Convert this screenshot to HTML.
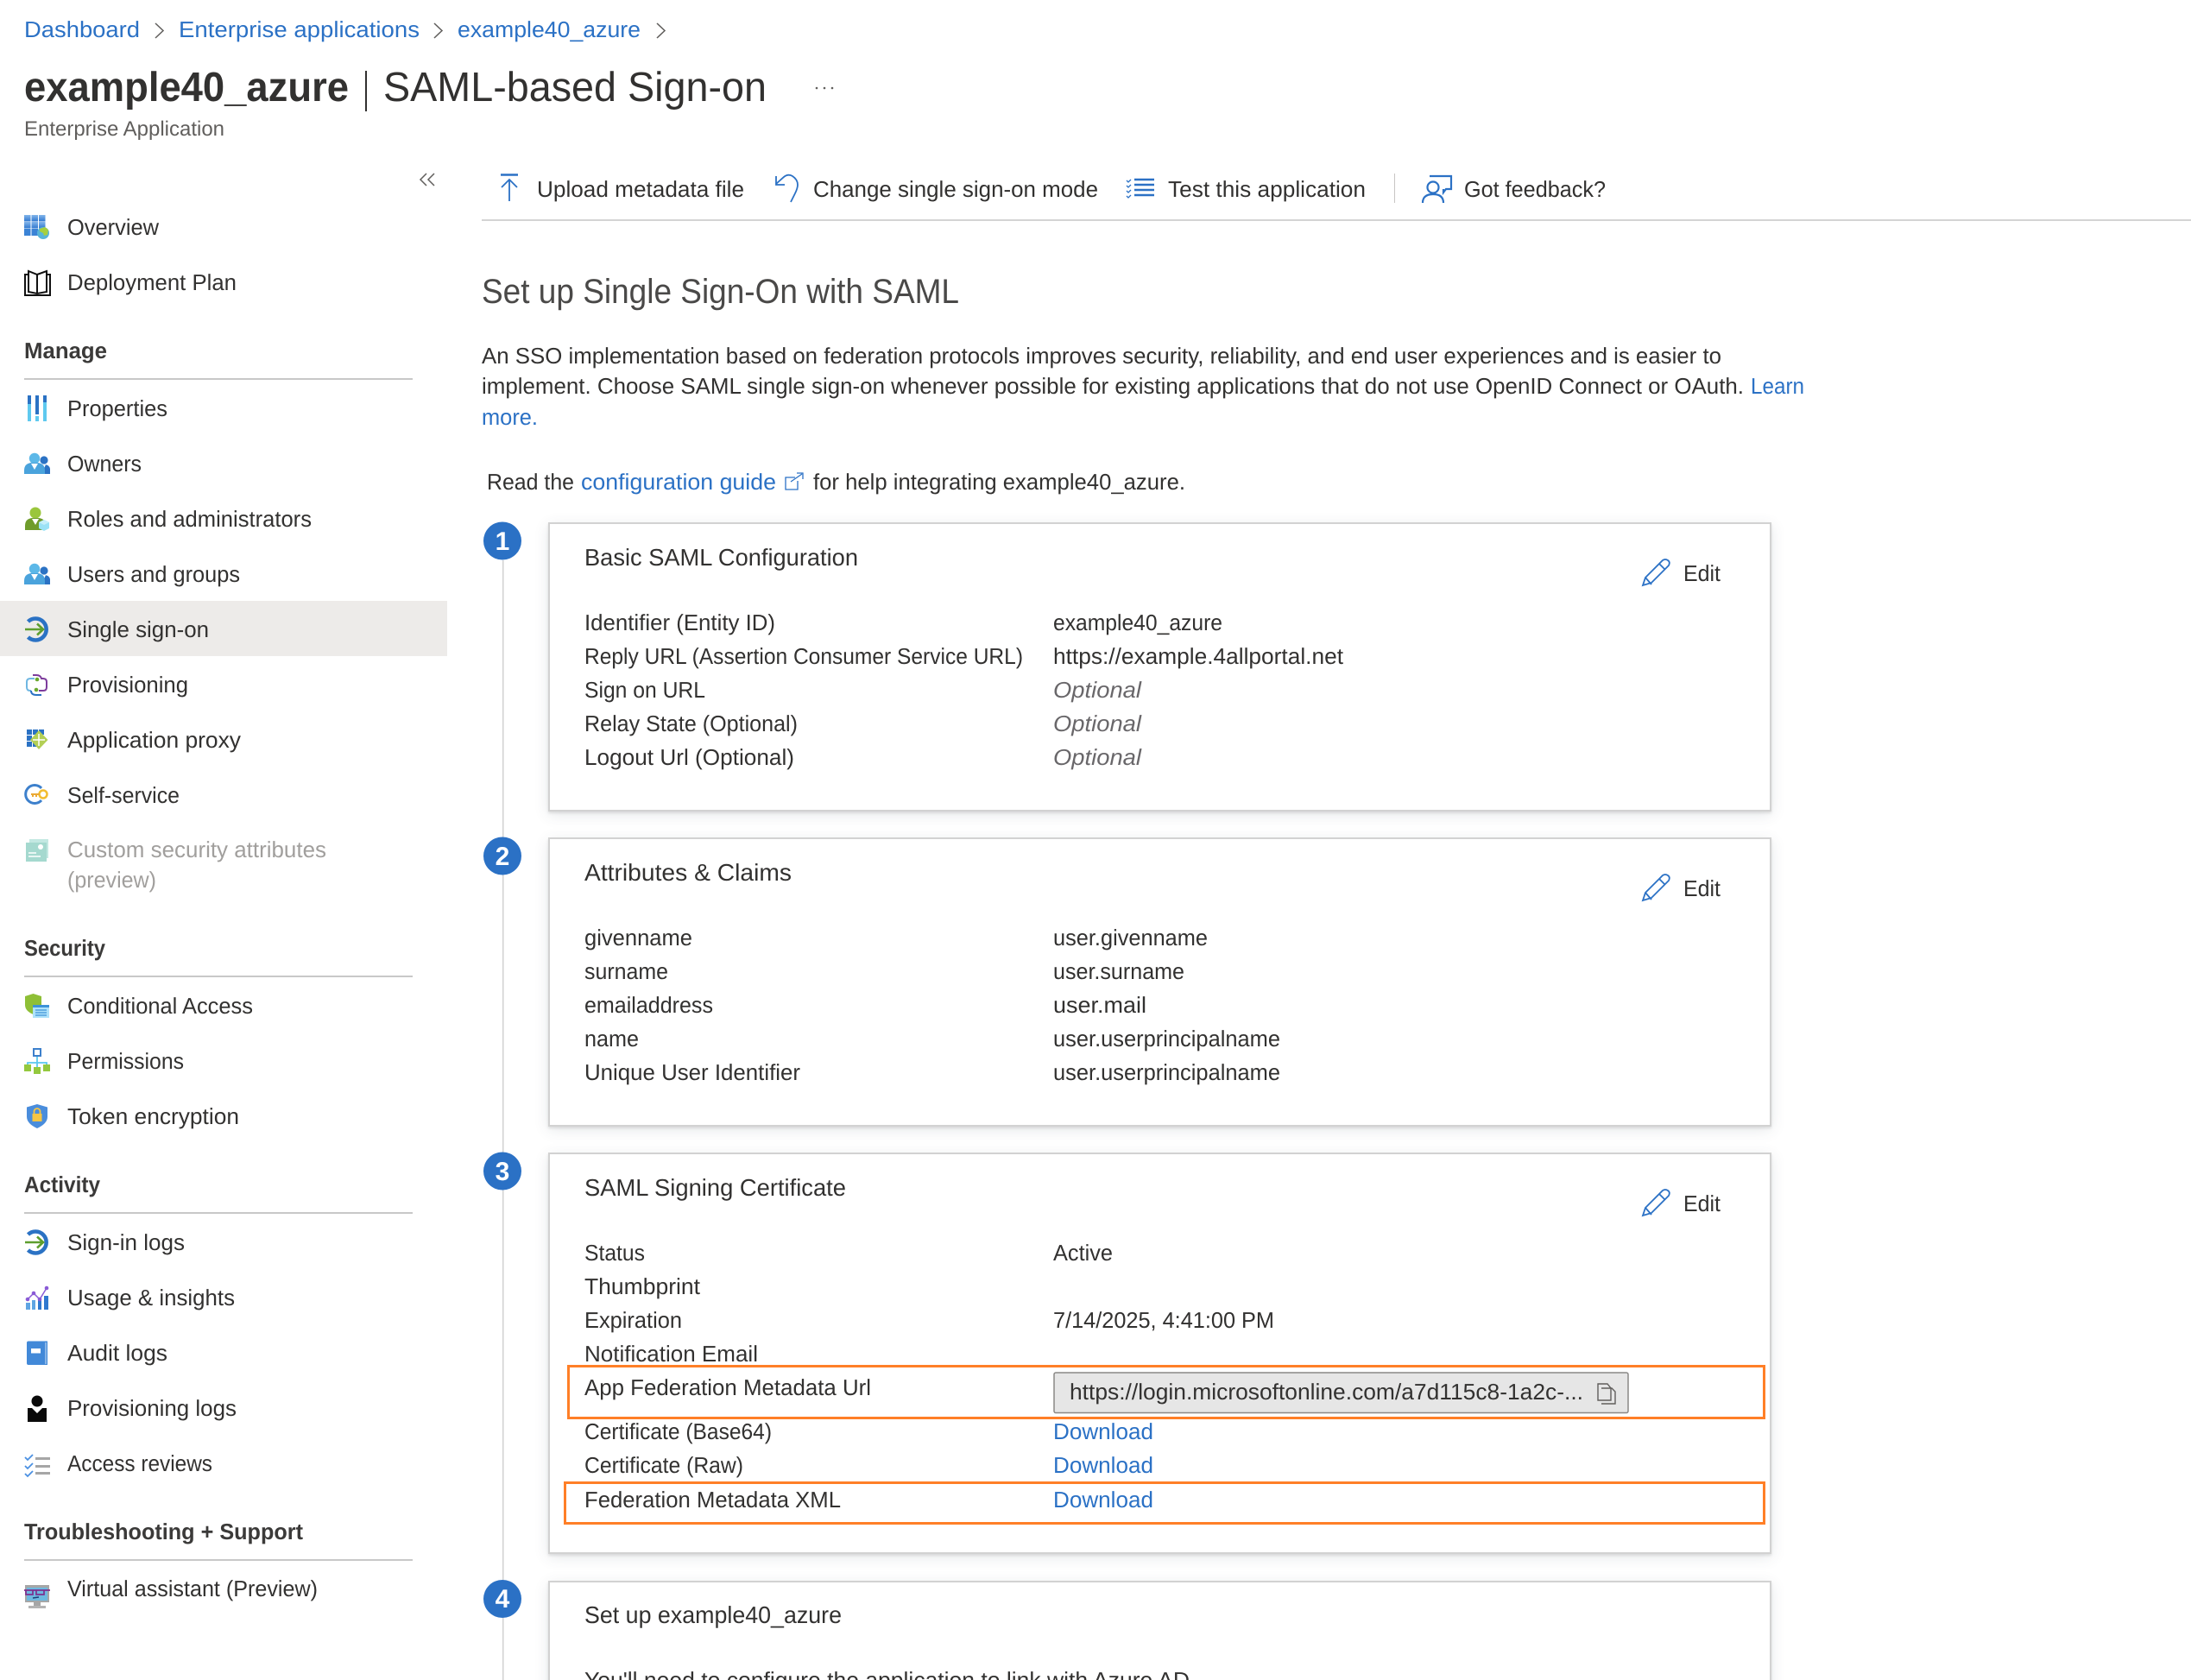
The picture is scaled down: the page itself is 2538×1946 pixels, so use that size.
<!DOCTYPE html>
<html lang="en">
<head>
<meta charset="utf-8">
<title>example40_azure | SAML-based Sign-on</title>
<style>
html,body{margin:0;padding:0;background:#fff;width:2538px;height:1946px;overflow:hidden}
#page{position:relative;width:2538px;height:1946px;overflow:hidden;background:#fff}
.card{position:absolute;left:635px;width:1417px;box-sizing:border-box;background:#fff;border:2px solid #d2d2d2;box-shadow:0 2px 3px rgba(0,0,0,.1),0 4px 16px rgba(60,70,90,.12)}
svg{position:absolute;left:0;top:0}
text{font-family:"Liberation Sans",Arial,sans-serif;font-size:26px;fill:#323130;text-rendering:geometricPrecision;white-space:pre;transform:translateY(-1px)}
.l{fill:#2b71c5}
.b{font-weight:700;fill:#3b3a39}
.g{fill:#a19f9d}
.o{font-style:italic;fill:#69676a}
.t{font-size:27.5px}
.c text{transform:translate(-1px,-1px)}
</style>
</head>
<body>
<div id="page">
<div class="card" style="top:605px;height:335px"></div>
<div class="card" style="top:970px;height:335px"></div>
<div class="card" style="top:1335px;height:465px"></div>
<div class="card" style="top:1831px;height:135px"></div>
<svg width="2538" height="1946" viewBox="0 0 2538 1946" xmlns="http://www.w3.org/2000/svg">
<defs>
<linearGradient id="pb" x1="0" y1="0" x2="0" y2="1"><stop offset="0" stop-color="#83b5ea"/><stop offset="1" stop-color="#2f78cf"/></linearGradient>
<g id="people">
<circle cx="51" cy="533" r="4.600" fill="#2b72c4"/><path d="M45 549v-6q0-5 6-5t7 5v6z" fill="#2b72c4"/><path d="M49 538l2 5 2-5z" fill="#fff"/>
<circle cx="40" cy="531" r="6.200" fill="#5cb8e8"/><path d="M28 549v-4q0-8 8-9h8q8 1 8 9v4z" fill="#4aa3dc"/><path d="M36 537l4 7 4-7z" fill="#fff"/>
</g>
<g id="sso" fill="none">
<path d="M32.500 720a12.500 12.500 0 1 1 0 18" stroke="#2b72c4" stroke-width="4.600"/>
<path d="M29 729h21M43 722.500l7 6.500-7 6.500" stroke="#5e9e2e" stroke-width="2.600"/>
</g>
<g id="edit" fill="none" stroke="#2b71c5" stroke-width="1.800">
<path d="M1903 678l3-9 20-20q3-2 6 0t1 6l-20 20zM1906 669l7 8M1922 653l7 7"/>
</g>
</defs>

<!-- breadcrumb -->
<text x="28" y="44" class="l" textLength="134" lengthAdjust="spacingAndGlyphs">Dashboard</text>
<text x="207" y="44" class="l" textLength="279" lengthAdjust="spacingAndGlyphs">Enterprise applications</text>
<text x="530" y="44" class="l" textLength="212" lengthAdjust="spacingAndGlyphs">example40_azure</text>
<g fill="none" stroke="#605e5c" stroke-width="1.500"><path d="M180 27l9 8.500-9 8.500M503 27l9 8.500-9 8.500M761 27l9 8.500-9 8.500"/></g>

<!-- title -->
<text x="28" y="118" class="b" style="font-size:48px;fill:#323130" textLength="376" lengthAdjust="spacingAndGlyphs">example40_azure</text>
<rect x="423" y="82" width="2" height="47" fill="#323130"/>
<text x="444" y="118" style="font-size:48px" textLength="444" lengthAdjust="spacingAndGlyphs">SAML-based Sign-on</text>
<g fill="#605e5c"><circle cx="946" cy="102" r="1.300"/><circle cx="955" cy="102" r="1.300"/><circle cx="964" cy="102" r="1.300"/></g>
<text x="28" y="158" style="font-size:24px;fill:#605e5c" textLength="232" lengthAdjust="spacingAndGlyphs">Enterprise Application</text>
<path d="M494 201l-7 7 7 7M503 201l-7 7 7 7" fill="none" stroke="#605e5c" stroke-width="1.500"/>

<!-- toolbar -->
<g fill="none" stroke="#2b71c5" stroke-width="1.800">
<path d="M580 202.500h20" stroke-width="2.400"/><path d="M590 233v-25M581 217l9-9 9 9"/>
<path d="M899 204v10h10M899 213l9-8q5-4 10-1 6 4 6 10 0 4-3 10l-5 10" />
</g>
<g fill="none" stroke="#2b71c5" stroke-width="2.200">
<path d="M1314 208h23M1314 214h23M1314 220h23M1314 226h23" stroke-width="2.400"/>
<path d="M1305 209l2 2 3-3M1305 215l2 2 3-3M1305 221l2 2 3-3M1305 227l2 2 3-3" stroke-width="1.300"/>
<path d="M1656 204h25v15h-6l-3 4v-4" />
<circle cx="1660" cy="217" r="6.500"/><path d="M1648 235q0-10 12-10t12 10"/>
</g>
<text x="622" y="229" textLength="240" lengthAdjust="spacingAndGlyphs">Upload metadata file</text>
<text x="942" y="229" textLength="330" lengthAdjust="spacingAndGlyphs">Change single sign-on mode</text>
<text x="1353" y="229" textLength="229" lengthAdjust="spacingAndGlyphs">Test this application</text>
<rect x="1615" y="201" width="1" height="34" fill="#c8c6c4"/>
<text x="1696" y="229" textLength="164" lengthAdjust="spacingAndGlyphs">Got feedback?</text>
<rect x="558" y="254" width="1980" height="2" fill="#d4d4d4"/>

<!-- sidebar selection -->
<rect x="0" y="696" width="518" height="64" fill="#edebe9"/>

<!-- sidebar text -->
<text x="78" y="273" textLength="106" lengthAdjust="spacingAndGlyphs">Overview</text>
<text x="78" y="337" textLength="196" lengthAdjust="spacingAndGlyphs">Deployment Plan</text>
<text x="28" y="416" class="b" textLength="96" lengthAdjust="spacingAndGlyphs">Manage</text>
<rect x="28" y="438" width="450" height="2" fill="#c8c8c8"/>
<text x="78" y="483" textLength="116" lengthAdjust="spacingAndGlyphs">Properties</text>
<text x="78" y="547" textLength="86" lengthAdjust="spacingAndGlyphs">Owners</text>
<text x="78" y="611" textLength="283" lengthAdjust="spacingAndGlyphs">Roles and administrators</text>
<text x="78" y="675" textLength="200" lengthAdjust="spacingAndGlyphs">Users and groups</text>
<text x="78" y="739" textLength="164" lengthAdjust="spacingAndGlyphs">Single sign-on</text>
<text x="78" y="803" textLength="140" lengthAdjust="spacingAndGlyphs">Provisioning</text>
<text x="78" y="867" textLength="201" lengthAdjust="spacingAndGlyphs">Application proxy</text>
<text x="78" y="931" textLength="130" lengthAdjust="spacingAndGlyphs">Self-service</text>
<text x="78" y="994" class="g" textLength="300" lengthAdjust="spacingAndGlyphs">Custom security attributes</text>
<text x="78" y="1029" class="g" textLength="103" lengthAdjust="spacingAndGlyphs">(preview)</text>
<text x="28" y="1108" class="b" textLength="94" lengthAdjust="spacingAndGlyphs">Security</text>
<rect x="28" y="1130" width="450" height="2" fill="#c8c8c8"/>
<text x="78" y="1175" textLength="215" lengthAdjust="spacingAndGlyphs">Conditional Access</text>
<text x="78" y="1239" textLength="135" lengthAdjust="spacingAndGlyphs">Permissions</text>
<text x="78" y="1303" textLength="199" lengthAdjust="spacingAndGlyphs">Token encryption</text>
<text x="28" y="1382" class="b" textLength="88" lengthAdjust="spacingAndGlyphs">Activity</text>
<rect x="28" y="1404" width="450" height="2" fill="#c8c8c8"/>
<text x="78" y="1449" textLength="136" lengthAdjust="spacingAndGlyphs">Sign-in logs</text>
<text x="78" y="1513" textLength="194" lengthAdjust="spacingAndGlyphs">Usage &amp; insights</text>
<text x="78" y="1577" textLength="116" lengthAdjust="spacingAndGlyphs">Audit logs</text>
<text x="78" y="1641" textLength="196" lengthAdjust="spacingAndGlyphs">Provisioning logs</text>
<text x="78" y="1705" textLength="168" lengthAdjust="spacingAndGlyphs">Access reviews</text>
<text x="28" y="1784" class="b" textLength="323" lengthAdjust="spacingAndGlyphs">Troubleshooting + Support</text>
<rect x="28" y="1806" width="450" height="2" fill="#c8c8c8"/>
<text x="78" y="1850" textLength="290" lengthAdjust="spacingAndGlyphs">Virtual assistant (Preview)</text>

<!-- sidebar icons -->
<g fill="url(#pb)"><rect x="28" y="249" width="7.500" height="7.500"/><rect x="36.500" y="249" width="7.500" height="7.500"/><rect x="45" y="249" width="7.500" height="7.500"/><rect x="28" y="257" width="7.500" height="7.500"/><rect x="36.500" y="257" width="7.500" height="7.500"/><rect x="45" y="257" width="7.500" height="7.500"/></g>
<g fill="#3b83d6"><rect x="28" y="265" width="7.500" height="8"/><rect x="36.500" y="265" width="7.500" height="8"/></g>
<circle cx="50" cy="270" r="7" fill="#58b4d8"/><path d="M46 265l6-2 4 3-1 6-4 1-1-3-4-2z" fill="#a6cf3e"/>
<path d="M33 318H29v24h29v-24h-4M33 314l10 4 11-4v24l-11 2-10-2zM43 318v22" fill="none" stroke="#111" stroke-width="2"/>
<g fill="#5fc9ef"><rect x="32" y="458" width="4" height="30"/><rect x="41" y="458" width="4" height="30"/><rect x="50" y="458" width="4" height="30"/></g>
<g fill="#2b72c4"><rect x="32" y="458" width="4" height="10"/><rect x="41" y="458" width="4" height="22"/><rect x="50" y="458" width="4" height="8"/></g>
<rect x="41" y="480" width="4" height="2" fill="#fff"/>
<use href="#people"/>
<use href="#people" y="128"/>
<circle cx="41" cy="594" r="6.500" fill="#9ac63c"/><path d="M29 614v-5q0-8 8-9h8q8 1 8 9v5z" fill="#6f9c2b"/><path d="M37 601l4 7 4-7z" fill="#fff"/>
<path d="M45 605l6-3 6 3v7l-6 3-6-3z" fill="#9be2f6"/><path d="M45 605l6 3 6-3-6-3z" fill="#c6effa"/>
<use href="#sso"/>
<use href="#sso" y="710"/>
<g fill="none" stroke-width="2">
<path d="M38 782h4q5 0 6 4h2q4 0 4 4v6q0 4-4 4h-5" stroke="#7d3c9c"/>
<path d="M40 786h-5q-4 0-4 4v6q0 4 4 4h1" stroke="#6fb7e2"/>
<path d="M36 800q0 5 6 5h6" stroke="#2b72c4"/>
</g>
<circle cx="43" cy="787" r="2.300" fill="#6aa82e"/><circle cx="42" cy="799" r="2.300" fill="#6aa82e"/>
<g fill="#2b72c4"><rect x="31" y="845" width="6" height="6"/><rect x="38" y="845" width="6" height="6"/><rect x="45" y="845" width="6" height="6"/><rect x="31" y="852" width="6" height="6"/><rect x="31" y="859" width="6" height="6"/><rect x="38" y="859" width="6" height="6"/></g>
<path d="M45 846l10.500 11L45 868l-10-11z" fill="#b3cf55"/><path d="M45 850v14M38 857h14" stroke="#fff" stroke-width="1.500"/>
<path d="M48 913a10.500 10.500 0 1 0 0 14" fill="none" stroke="#3d80cc" stroke-width="3"/>
<circle cx="50" cy="920" r="4.500" fill="none" stroke="#f2bd30" stroke-width="2.500"/><path d="M36 920h10M38 920v3M42 920v3" stroke="#eaa935" stroke-width="2"/>
<rect x="34" y="972" width="22" height="22" fill="#c3e8e2"/><rect x="30" y="976" width="24" height="22" fill="#a5d9cf"/>
<path d="M33 988h9M33 992h14" stroke="#fff" stroke-width="1.500"/><circle cx="47" cy="981" r="3" fill="#fff"/>
<path d="M29 1154l9.500-3 9.500 3v10q0 7-9.500 11-9.500-4-9.500-11z" fill="#8ebf36"/>
<rect x="38" y="1164" width="19" height="15" fill="#aee2fa"/><rect x="38" y="1164" width="19" height="3" fill="#3d92d8"/>
<path d="M41 1170h13M41 1173h13M41 1176h13" stroke="#3d92d8" stroke-width="1.200"/>
<rect x="39" y="1215" width="8" height="8" fill="#fff" stroke="#3d80cc" stroke-width="2"/>
<path d="M43 1224v12M32 1236v-5h22v5" fill="none" stroke="#5bc8ee" stroke-width="1.800"/>
<g fill="#94c83e"><rect x="28" y="1233" width="8" height="8"/><rect x="39" y="1236" width="8" height="8"/><rect x="50" y="1233" width="8" height="8"/></g>
<path d="M43 1279l12 3.500v11q0 8-12 13.500-12-5.500-12-13.500v-11z" fill="#4a8ddc"/>
<rect x="37.500" y="1290" width="11" height="9" fill="#f6c544"/><path d="M39.500 1290v-2.500a3.500 3.500 0 0 1 7 0v2.500" fill="none" stroke="#f6c544" stroke-width="1.800"/>
<g fill="#2f78cf"><rect x="44" y="1505" width="4" height="12"/><rect x="51" y="1501" width="5" height="16"/></g>
<g fill="#5fa5e3"><rect x="30" y="1509" width="5" height="8"/><rect x="37" y="1506" width="4" height="11"/></g>
<path d="M32 1505l7-7 7 7 8-13" fill="none" stroke="#8a5bd6" stroke-width="1.500"/>
<g fill="#8a5bd6"><circle cx="32" cy="1505" r="2.300"/><circle cx="39" cy="1498" r="2.300"/><circle cx="46" cy="1505" r="2.300"/><circle cx="54" cy="1492" r="2.300"/></g>
<path d="M33 1553.500h22v27.500H33q-2 0-2-2v-23.500q0-2 2-2z" fill="#4289d8"/><path d="M53 1555v25" stroke="#cfe3f7" stroke-width="1"/>
<rect x="36" y="1562" width="11" height="5.500" fill="#fff"/>
<circle cx="43" cy="1623" r="6.500" fill="#0a0a0a"/><path d="M32 1631h5l6 6 6-6h5v16H32z" fill="#0a0a0a"/>
<g fill="none" stroke="#4a90e2" stroke-width="1.800"><path d="M29 1688l3 3 6-6M29 1698l3 3 6-6M29 1707l3 3 6-6"/></g>
<g fill="#a6a6a6"><rect x="41" y="1688" width="17" height="3"/><rect x="41" y="1697" width="17" height="3"/><rect x="41" y="1705" width="17" height="3"/></g>
<rect x="29" y="1836" width="28" height="20" fill="#a6a6a6"/><rect x="31" y="1839" width="24" height="15" fill="#6db8e0"/>
<rect x="39" y="1856" width="8" height="4" fill="#a6a6a6"/><rect x="33" y="1860" width="20" height="3" fill="#b4b4b4"/>
<path d="M28 1842h30M30 1842h8v5h-8zM42 1842h9v5h-9z" fill="none" stroke="#7d2f8e" stroke-width="1.700"/>
<path d="M38 1851l7-1" stroke="#1d3f7a" stroke-width="1.500"/>

<!-- content header -->
<text x="558" y="352" style="font-size:40px;fill:#4a4948" textLength="553" lengthAdjust="spacingAndGlyphs">Set up Single Sign-On with SAML</text>
<text x="558" y="422" textLength="1436" lengthAdjust="spacingAndGlyphs">An SSO implementation based on federation protocols improves security, reliability, and end user experiences and is easier to</text>
<text x="558" y="457" textLength="1462" lengthAdjust="spacingAndGlyphs">implement. Choose SAML single sign-on whenever possible for existing applications that do not use OpenID Connect or OAuth.</text>
<text x="2028" y="457" class="l" textLength="62" lengthAdjust="spacingAndGlyphs">Learn</text>
<text x="558" y="493" class="l" textLength="65" lengthAdjust="spacingAndGlyphs">more.</text>
<text x="564" y="568" textLength="101" lengthAdjust="spacingAndGlyphs">Read the</text>
<text x="673" y="568" class="l" textLength="226" lengthAdjust="spacingAndGlyphs">configuration guide</text>
<path d="M921 553h-11v14h14v-10M916 558l13-9M923 548h7v7" fill="none" stroke="#2b71c5" stroke-width="1.300"/>
<text x="942" y="568" textLength="431" lengthAdjust="spacingAndGlyphs">for help integrating example40_azure.</text>

<!-- timeline -->
<rect x="582" y="649" width="1.500" height="1297" fill="#d2d2d2"/>
<g fill="#2b71c5"><circle cx="582" cy="626.500" r="22"/><circle cx="582" cy="991.500" r="22"/><circle cx="582" cy="1356.500" r="22"/><circle cx="582" cy="1852" r="22"/></g>
<g style="font-weight:700" text-anchor="middle">
<text x="582" y="638" style="fill:#fff;font-size:30px">1</text>
<text x="582" y="1003" style="fill:#fff;font-size:30px">2</text>
<text x="582" y="1368" style="fill:#fff;font-size:30px">3</text>
<text x="582" y="1863" style="fill:#fff;font-size:30px">4</text>
</g>

<g class="c">
<!-- card 1 -->
<text x="678" y="656" class="t" textLength="317" lengthAdjust="spacingAndGlyphs">Basic SAML Configuration</text>
<text x="1951" y="674" textLength="43" lengthAdjust="spacingAndGlyphs">Edit</text>
<text x="678" y="731" textLength="221" lengthAdjust="spacingAndGlyphs">Identifier (Entity ID)</text>
<text x="678" y="770" textLength="508" lengthAdjust="spacingAndGlyphs">Reply URL (Assertion Consumer Service URL)</text>
<text x="678" y="809" textLength="140" lengthAdjust="spacingAndGlyphs">Sign on URL</text>
<text x="678" y="848" textLength="247" lengthAdjust="spacingAndGlyphs">Relay State (Optional)</text>
<text x="678" y="887" textLength="243" lengthAdjust="spacingAndGlyphs">Logout Url (Optional)</text>
<text x="1221" y="731" textLength="196" lengthAdjust="spacingAndGlyphs">example40_azure</text>
<text x="1221" y="770" textLength="336" lengthAdjust="spacingAndGlyphs">https://example.4allportal.net</text>
<text x="1221" y="809" class="o" textLength="102" lengthAdjust="spacingAndGlyphs">Optional</text>
<text x="1221" y="848" class="o" textLength="102" lengthAdjust="spacingAndGlyphs">Optional</text>
<text x="1221" y="887" class="o" textLength="102" lengthAdjust="spacingAndGlyphs">Optional</text>

<!-- card 2 -->
<text x="678" y="1021" class="t" textLength="240" lengthAdjust="spacingAndGlyphs">Attributes &amp; Claims</text>
<text x="1951" y="1039" textLength="43" lengthAdjust="spacingAndGlyphs">Edit</text>
<text x="678" y="1096" textLength="125" lengthAdjust="spacingAndGlyphs">givenname</text>
<text x="678" y="1135" textLength="97" lengthAdjust="spacingAndGlyphs">surname</text>
<text x="678" y="1174" textLength="149" lengthAdjust="spacingAndGlyphs">emailaddress</text>
<text x="678" y="1213" textLength="63" lengthAdjust="spacingAndGlyphs">name</text>
<text x="678" y="1252" textLength="250" lengthAdjust="spacingAndGlyphs">Unique User Identifier</text>
<text x="1221" y="1096" textLength="179" lengthAdjust="spacingAndGlyphs">user.givenname</text>
<text x="1221" y="1135" textLength="152" lengthAdjust="spacingAndGlyphs">user.surname</text>
<text x="1221" y="1174" textLength="108" lengthAdjust="spacingAndGlyphs">user.mail</text>
<text x="1221" y="1213" textLength="263" lengthAdjust="spacingAndGlyphs">user.userprincipalname</text>
<text x="1221" y="1252" textLength="263" lengthAdjust="spacingAndGlyphs">user.userprincipalname</text>

<!-- card 3 -->
<text x="678" y="1386" class="t" textLength="303" lengthAdjust="spacingAndGlyphs">SAML Signing Certificate</text>
<text x="1951" y="1404" textLength="43" lengthAdjust="spacingAndGlyphs">Edit</text>
<text x="678" y="1461" textLength="70" lengthAdjust="spacingAndGlyphs">Status</text>
<text x="678" y="1500" textLength="134" lengthAdjust="spacingAndGlyphs">Thumbprint</text>
<text x="678" y="1539" textLength="113" lengthAdjust="spacingAndGlyphs">Expiration</text>
<text x="678" y="1578" textLength="201" lengthAdjust="spacingAndGlyphs">Notification Email</text>
<text x="678" y="1617" textLength="332" lengthAdjust="spacingAndGlyphs">App Federation Metadata Url</text>
<text x="678" y="1668" textLength="217" lengthAdjust="spacingAndGlyphs">Certificate (Base64)</text>
<text x="678" y="1707" textLength="184" lengthAdjust="spacingAndGlyphs">Certificate (Raw)</text>
<text x="678" y="1747" textLength="297" lengthAdjust="spacingAndGlyphs">Federation Metadata XML</text>
<text x="1221" y="1461" textLength="69" lengthAdjust="spacingAndGlyphs">Active</text>
<text x="1221" y="1539" textLength="256" lengthAdjust="spacingAndGlyphs">7/14/2025, 4:41:00 PM</text>
<text x="1221" y="1668" class="l" textLength="116" lengthAdjust="spacingAndGlyphs">Download</text>
<text x="1221" y="1707" class="l" textLength="116" lengthAdjust="spacingAndGlyphs">Download</text>
<text x="1221" y="1747" class="l" textLength="116" lengthAdjust="spacingAndGlyphs">Download</text>

<!-- card 4 -->
<text x="678" y="1881" class="t" textLength="298" lengthAdjust="spacingAndGlyphs">Set up example40_azure</text>
<text x="678" y="1956" textLength="701" lengthAdjust="spacingAndGlyphs">You'll need to configure the application to link with Azure AD</text>
</g>

<use href="#edit"/>
<use href="#edit" y="365"/>
<use href="#edit" y="730"/>
<rect x="1221" y="1590" width="665" height="46.500" rx="2" fill="#e6e6e6" stroke="#8a8886" stroke-width="1.500"/>
<text x="1239" y="1622" textLength="595" lengthAdjust="spacingAndGlyphs">https://login.microsoftonline.com/a7d115c8-1a2c-...</text>
<path d="M1851 1603h11l4 5v14h-15zM1855 1608h12l4 4v14h-16" fill="#e6e6e6" stroke="#605e5c" stroke-width="1.400"/>
<rect x="658.500" y="1582.500" width="1385" height="60" fill="none" stroke="#ff7f27" stroke-width="3"/>
<rect x="654.500" y="1717.500" width="1389" height="47" fill="none" stroke="#ff7f27" stroke-width="3"/>
</svg>
</div>
</body>
</html>
